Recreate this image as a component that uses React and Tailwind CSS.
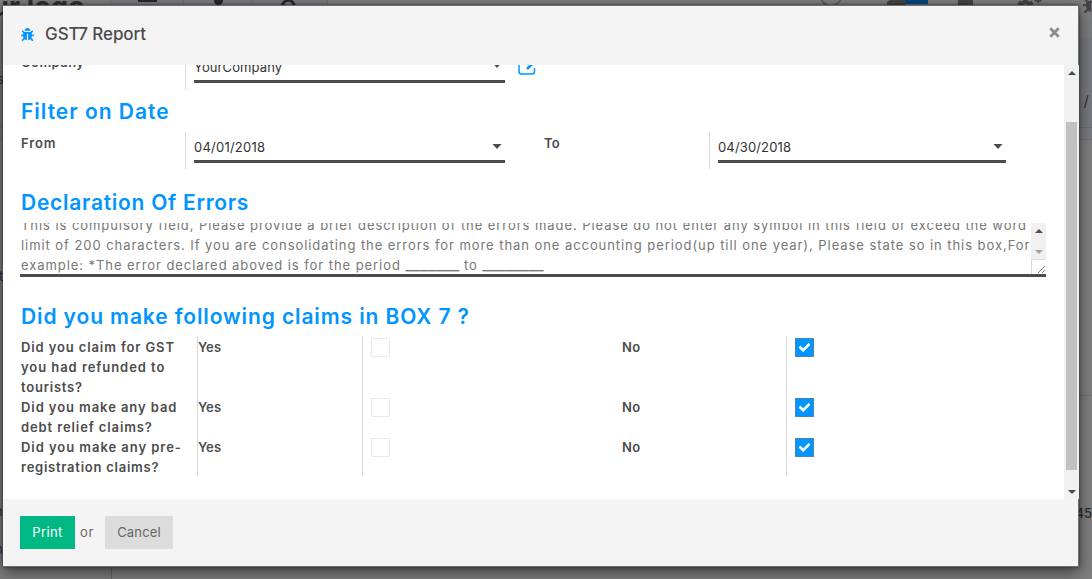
import { FaBug, FaCheck, FaCog, FaSearch } from "react-icons/fa";

function Caret({ className = "" }) {
  return (
    <svg className={className} width="10" height="5" viewBox="0 0 10 5">
      <path d="M0.5 0h9L5 5z" fill="currentColor" />
    </svg>
  );
}

function Label({ children, className = "" }) {
  return (
    <span className={`text-[13px] leading-[20px] font-semibold whitespace-nowrap text-[#4c4c4c] ${className}`}>
      {children}
    </span>
  );
}

function Heading({ children, className = "" }) {
  return (
    <h2 className={`flex items-center text-[21px] leading-7 font-semibold whitespace-nowrap text-[#0095ff] ${className}`}>
      {children}
    </h2>
  );
}

function SelectField({ value, valueClass = "", caretClass = "" }) {
  return (
    <div className="flex h-[31px] items-center justify-between border-b-[3px] border-[#4c4c4c] pt-px pr-[3px] text-[13px] text-[#333333]">
      <span className={`pt-[2px] ${valueClass}`}>{value}</span>
      <Caret className={`text-[#4c4c4c] ${caretClass}`} />
    </div>
  );
}

function Checkbox({ checked }) {
  return checked ? (
    <span className="flex size-[19px] items-center justify-center border border-[#4c86b3] bg-[#0095ff] text-white">
      <FaCheck size={11} stroke="currentColor" strokeWidth={30} />
    </span>
  ) : (
    <span className="block size-[19px] rounded-[1px] border border-[#e9e9e9] bg-white" />
  );
}

function ClaimRow({ lines, height }) {
  return (
    <div className={`flex ${height}`}>
      <div className="flex w-[176px] flex-col pt-px">
        {lines.map(([text, tracking]) => (
          <Label key={text} className={tracking}>{text}</Label>
        ))}
      </div>
      <div className="w-[165px] border-l border-[#d9d9d9] pt-px">
        <Label className="block tracking-[0.1px]">Yes</Label>
      </div>
      <div className="w-[260px] border-l border-[#d9d9d9] pt-[2px] pl-[8px]">
        <Checkbox />
      </div>
      <div className="w-[164px] pt-px">
        <Label className="block tracking-[0.5px]">No</Label>
      </div>
      <div className="border-l border-[#d9d9d9] pt-[2px] pl-[8px]">
        <Checkbox checked />
      </div>
    </div>
  );
}

function PageBehind() {
  return (
    <div className="flex h-full flex-col bg-[#7f7f7f]">
      <div className="flex h-[38px] shrink-0 items-start overflow-hidden bg-[#7d7e7f]">
        <div className="-mt-[9px] w-[111px] shrink-0 border-r border-[#727375] text-[27px] leading-[32px] font-bold whitespace-nowrap text-[#303030]">
          <span className="-ml-[8px] tracking-[0.2px]">ur logo</span>
        </div>
        <div className="flex h-full w-[73px] shrink-0 justify-center border-r border-[#727375] bg-[#797c7f]">
          <span className="h-[2px] w-[19px] bg-[#26282b]" />
        </div>
        <div className="flex h-full w-[69px] shrink-0 justify-center border-r border-[#727375] bg-[#797c7f]">
          <span className="h-[5px] w-[9px] rounded-b-full bg-[#26282b]" />
        </div>
        <div className="flex h-full w-[75px] shrink-0 justify-center border-r border-[#727375] bg-[#797c7f]">
          <FaSearch className="-mt-px text-[#26282b]" size={18} />
        </div>
        <span className="-mt-[15px] ml-[492px] size-[22px] shrink-0 rounded-full border-2 border-[#5d5d5d]" />
        <span className="ml-[45px] h-[5px] w-[18px] shrink-0 rounded-tl bg-[#454545]" />
        <span className="h-[4px] w-[23px] shrink-0 bg-[#004b80]" />
        <span className="ml-[30px] h-[5px] w-[15px] shrink-0 bg-[#454545]" />
        <FaCog className="-mt-[2px] ml-[44px] shrink-0 text-[#454545]" size={17} />
        <FaCog className="-mt-[5px] shrink-0 text-[#454545]" size={8} />
        <FaBug className="-mt-[5px] ml-[41px] shrink-0 text-[#454545]" size={18} />
      </div>
      <div className="flex h-[90px] shrink-0 items-start justify-between border-b border-[#6b6f75] bg-[#777a7e]">
        <span className="-ml-[3px] pt-[32px] text-[13px] text-[#3a3026]">s</span>
        <span className="pt-[53px] pr-[3px] text-[15px] leading-5 text-[#333333]">/</span>
      </div>
      <div className="h-[12px] shrink-0 border-b border-[#6e7072] bg-[#797c80]" />
      <div className="flex flex-1">
        <div className="flex w-[112px] flex-col border-r border-[#686868] pt-[126px] text-[13px] leading-5 text-[#1c2f4b]">
          <span className="-ml-[1px]">t</span>
          <span className="mt-[215px] -ml-[5px] text-[#3f2c12]">n</span>
          <span className="mt-[18px] -ml-[5px] text-[#16305c]">n</span>
        </div>
        <div className="flex-1 pt-[255px]">
          <div className="border-t border-[#727272] pt-[107px] text-right text-[13px] leading-5 font-medium text-[#2e2e2e]">
            45
          </div>
        </div>
      </div>
    </div>
  );
}

export default function App() {
  return (
    <div className="relative h-[579px] w-[1092px] overflow-hidden font-['Inter','Liberation_Sans',sans-serif]">
      <PageBehind />

      <div className="absolute top-[5px] left-[3px] flex h-[562px] w-[1076px] flex-col border-t border-r border-b border-[#6e6e6e] bg-[#f4f4f4] shadow-[0_5px_15px_rgba(0,0,0,0.55),0_0_3px_rgba(0,0,0,0.5)]">
        <header className="flex h-[59px] shrink-0 items-center justify-between pr-[18px] pb-[3px] pl-[18px]">
          <div className="flex items-center">
            <FaBug className="mt-px text-[#0095ff]" size={13} />
            <h1 className="ml-[11px] text-[17px] leading-6 font-medium tracking-[-0.08px] text-[#4c4c4c]">GST7 Report</h1>
          </div>
          <svg className="-mt-[4px]" width="11" height="11" viewBox="0 0 11 11">
            <path d="M1.3 1.3l8.4 8.4M9.7 1.3L1.3 9.7" stroke="#8c8c8c" strokeWidth="2.8" />
          </svg>
        </header>

        <div className="-mr-px flex h-[434px] shrink-0 overflow-hidden bg-white">
          <main className="-mt-[13px] w-[1061px] shrink-0 pl-[18px]">
            <div className="flex h-[38px]">
              <Label className="w-[164px] tracking-[0.45px]">Company</Label>
              <div className="w-[320px] border-l border-[#d9d9d9] pl-[8px]">
                <SelectField value="YourCompany" valueClass="tracking-[0.1px]" caretClass="-mt-[3px]" />
              </div>
              <svg className="mt-[6px] ml-[13px] text-[#0095ff]" width="18" height="18" viewBox="0 0 18 18" fill="none" stroke="currentColor">
                <path d="M11 2H3.5Q1 2 1 4.5V13.5Q1 16 3.5 16H14Q16.5 16 16.5 13.5V10" strokeWidth="1.5" />
                <path d="M9 11l7-7" strokeWidth="2.6" />
              </svg>
            </div>

            <Heading className="h-[42px] pt-[2px] tracking-[1px]">Filter on Date</Heading>
            <div className="flex h-[37px]">
              <Label className="w-[164px] pt-px tracking-[0.9px]">From</Label>
              <div className="w-[320px] border-l border-[#d9d9d9] pl-[8px]">
                <SelectField value="04/01/2018" valueClass="tracking-[0.23px]" />
              </div>
              <Label className="ml-[39px] w-[165px] pt-px tracking-[0.2px]">To</Label>
              <div className="w-[297px] border-l border-[#d9d9d9] pl-[8px]">
                <SelectField value="04/30/2018" valueClass="tracking-[0.15px]" />
              </div>
            </div>

            <Heading className="mt-[19px] h-[28px] pt-px tracking-[0.73px]">Declaration Of Errors</Heading>
            <div className="mt-[7px] -ml-px flex h-[54px] w-[1026px] border-b-[3px] border-[#4c4c4c]">
              <div className="h-[51px] w-[1011px] overflow-hidden pl-px text-[13px] leading-5 tracking-[0.936px] whitespace-nowrap text-[#777777]">
                <div className="-mt-[8px]">
                  <p>This is compulsory field, Please provide a brief description of the errors made. Please do not enter any symbol in this field or exceed the word</p>
                  <p>limit of 200 characters. If you are consolidating the errors for more than one accounting period(up till one year), Please state so in this box,For</p>
                  <p className="h-5">
                    example: *The error declared aboved is for the period{" "}
                    <span className="text-[17px] leading-none tracking-[-0.05px]">_______</span> to{" "}
                    <span className="text-[17px] leading-none tracking-[-0.1px]">________</span>
                  </p>
                </div>
              </div>
              <div className="flex w-[15px] flex-col">
                <div className="flex h-[36px] flex-col items-center justify-between bg-[#f0f0f0] pt-[6px] pb-[5px]">
                  <svg width="8" height="4" viewBox="0 0 8 4"><path d="M0 4h8L4 0z" fill="#4c4c4c" /></svg>
                  <svg width="8" height="4" viewBox="0 0 8 4"><path d="M0 0h8L4 4z" fill="#a3a3a3" /></svg>
                </div>
                <div className="flex h-[15px] items-end justify-end border-t border-l border-[#dcdcdc] bg-white">
                  <svg width="9" height="9" viewBox="0 0 9 9"><path d="M1 8l7-7M5 8l3-3" stroke="#7d7d7d" /></svg>
                </div>
              </div>
            </div>

            <Heading className="mt-[25px] h-[28px] pt-px tracking-[0.89px]">Did you make following claims in BOX 7 ?</Heading>
            <div className="mt-[6px]">
              <ClaimRow
                height="h-[60px]"
                lines={[
                  ["Did you claim for GST", "tracking-[0.88px]"],
                  ["you had refunded to", "tracking-[0.94px]"],
                  ["tourists?", "tracking-[0.77px]"],
                ]}
              />
              <ClaimRow
                height="h-[40px]"
                lines={[
                  ["Did you make any bad", "tracking-[0.92px]"],
                  ["debt relief claims?", "tracking-[0.89px]"],
                ]}
              />
              <ClaimRow
                height="h-[40px]"
                lines={[
                  ["Did you make any pre-", "tracking-[0.95px]"],
                  ["registration claims?", "tracking-[0.75px]"],
                ]}
              />
            </div>
          </main>

          <div className="flex w-[15px] shrink-0 flex-col items-center bg-[#f1f1f1] pt-[6px] pb-[5px]">
            <svg width="8" height="4" viewBox="0 0 8 4"><path d="M0 4h8L4 0z" fill="#4c4c4c" /></svg>
            <div className="mt-[47px] h-[348px] w-[11px] bg-[#c1c1c1]" />
            <svg className="mt-auto" width="8" height="4" viewBox="0 0 8 4"><path d="M0 0h8L4 4z" fill="#4c4c4c" /></svg>
          </div>
        </div>

        <footer className="flex items-center pt-[17px] pl-[17px] text-[13px] text-[#666666]">
          <button className="h-[33px] w-[55px] bg-[#00b883] pt-px tracking-[0.4px] text-white">Print</button>
          <span className="ml-[5px] w-[25px] tracking-[0.8px]">or</span>
          <button className="h-[33px] w-[68px] bg-[#dcdcdc] pt-px tracking-[0.17px]">Cancel</button>
        </footer>
      </div>
    </div>
  );
}
